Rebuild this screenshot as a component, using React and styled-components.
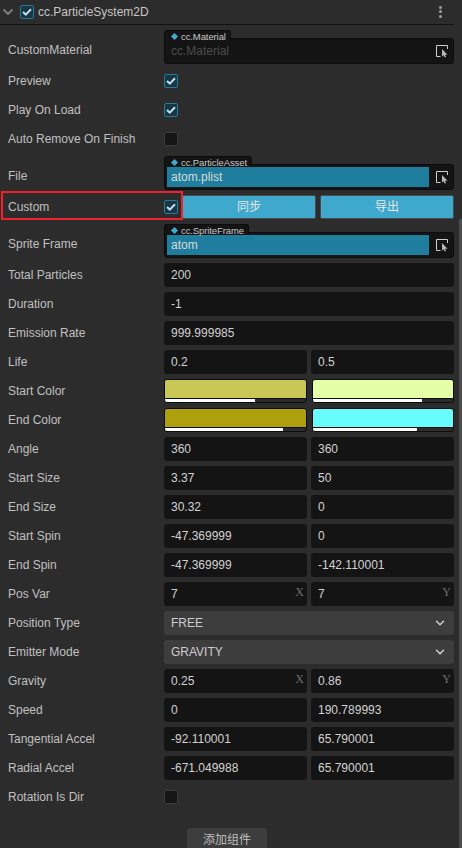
import React from "react";
import styled, { createGlobalStyle } from "styled-components";
import { ChevronDown } from "lucide-react";

const GlobalStyle = createGlobalStyle`
  html, body {
    margin: 0;
    height: 848px;
    overflow: hidden;
    background: #2c2c2c;
  }
`;

const Panel = styled.div`
  position: relative;
  width: 462px;
  height: 848px;
  overflow: hidden;
  background: #2c2c2c;
  color: #c0c0c0;
  font-family: "Liberation Sans", Arial, "Noto Sans CJK SC", sans-serif;
  font-size: 12px;
`;

const Header = styled.div`
  display: flex;
  align-items: center;
  gap: 4px;
  width: 454px;
  height: 25px;
  padding: 0 4px 1px 0;
  box-sizing: border-box;
  border-bottom: 1px solid #111;
`;

const Title = styled.span`
  flex: 1;
  font-size: 12px;
  color: #c6c6c6;
`;

const Dots = styled.div`
  display: flex;
  flex-direction: column;
  gap: 1.5px;
  margin-right: 8px;

  i {
    width: 3px;
    height: 3px;
    border-radius: 50%;
    background: #a0a0a0;
  }
`;

const List = styled.div`
  display: flex;
  flex-direction: column;
  gap: 5px;
  width: 454px;
  padding-top: 5px;
`;

const Row = styled.div`
  position: relative;
  display: flex;
  align-items: ${(p) => (p.$asset ? "flex-end" : "center")};
  min-height: 24px;
`;

const Label = styled.div`
  width: 164px;
  flex: none;
  padding-left: 8px;
  box-sizing: border-box;
  align-self: center;
  ${(p) => p.$asset && "padding-top: 5px;"}
`;

const Fields = styled.div`
  flex: 1;
  display: grid;
  grid-template-columns: repeat(${(p) => p.$cols || 1}, 1fr);
  gap: 4px;
`;

const ColorFields = styled.div`
  flex: 1;
  display: grid;
  grid-template-columns: 143px 142px;
  gap: 5px;
`;

const ActionFields = styled(Fields)`
  margin-left: 4px;
`;

const Input = styled.div`
  position: relative;
  height: 24px;
  line-height: 24px;
  padding-left: 7px;
  border-radius: 3px;
  background: #141414;
  color: #d2d2d2;
  overflow: hidden;
`;

const Axis = styled.span`
  position: absolute;
  right: 3px;
  top: -2px;
  font-family: "Liberation Serif", serif;
  font-size: 12px;
  color: #6e6e6e;
`;

const CheckBox = styled.div`
  display: flex;
  align-items: center;
  justify-content: center;
  width: 14px;
  height: 14px;
  box-sizing: border-box;
  border-radius: 2px;
  border: 1px solid ${(p) => (p.$on ? "#1f7e9e" : "#3c3c3c")};
  background: ${(p) => (p.$on ? "#1c3540" : "#161616")};
`;

const Swatch = styled.div`
  height: 24px;
  box-sizing: border-box;
  display: flex;
  flex-direction: column;
  border: 1px solid #0c0c0c;
  border-radius: 3px;
  background: #2c2c2c;
  overflow: hidden;
`;

const SwatchFill = styled.div`
  flex: 1;
  background: ${(p) => p.$color};
  border-bottom: 1px solid #0c0c0c;
`;

const AlphaTrack = styled.div`
  height: 3px;
`;

const AlphaBar = styled.div`
  height: 100%;
  background: #fff;
`;

const Select = styled.div`
  display: flex;
  align-items: center;
  justify-content: space-between;
  height: 24px;
  padding: 0 7px;
  border-radius: 3px;
  background: #3d3d3d;
  color: #cdcdcd;
`;

const AssetWrap = styled.div`
  position: relative;
  height: 34px;
  display: flex;
  flex-direction: column;
  justify-content: flex-end;
`;

const AssetTab = styled.div`
  position: absolute;
  left: 0;
  top: 0;
  display: flex;
  align-items: center;
  height: 10px;
  padding: 0 4px 0 7px;
  gap: 4px;
  background: #141414;
  border: 1px solid #0c0c0c;
  border-bottom: none;
  border-radius: 3px 3px 0 0;
  font-size: 9.5px;
  color: #c8c8c8;
  letter-spacing: -0.1px;
`;

const Diamond = styled.i`
  width: 5px;
  height: 5px;
  background: #43a9cc;
  transform: rotate(45deg);
`;

const AssetBox = styled.div`
  display: flex;
  align-items: center;
  height: 26px;
  box-sizing: border-box;
  padding: 2px 0 2px 2px;
  background: #141414;
  border: 1px solid #0c0c0c;
  border-radius: 3px;
`;

const AssetName = styled.div`
  flex: 1;
  height: 20px;
  line-height: 20px;
  padding-left: 4px;
  font-size: 12px;
  background: ${(p) => (p.$empty ? "transparent" : "#1f7e9e")};
  color: ${(p) => (p.$empty ? "#4c4c4c" : "#d8d8d8")};
`;

const AssetPick = styled.div`
  width: 24px;
  flex: none;
  box-sizing: border-box;
  display: flex;
  align-items: center;
  padding: 1px 0 0 7px;
`;

const ActionButton = styled.div`
  height: 24px;
  box-sizing: border-box;
  line-height: 22px;
  text-align: center;
  background: #3fa9cd;
  border: 1px solid #454c50;
  border-radius: 2px;
  color: #e6e6e6;
  font-size: 12px;
`;

const Highlight = styled.div`
  position: absolute;
  left: 1px;
  top: -4px;
  width: 182px;
  height: 29px;
  box-sizing: border-box;
  border: 2px solid #f0202c;
  pointer-events: none;
`;

const Footer = styled.div`
  display: flex;
  justify-content: center;
  width: 454px;
  margin-top: 19px;
`;

const AddButton = styled.div`
  width: 80px;
  height: 26px;
  line-height: 24px;
  text-align: center;
  border-radius: 3px 3px 0 0;
  background: #3d3d3d;
  color: #bdbdbd;
  font-size: 12px;
`;

const Scrollbar = styled.div`
  position: absolute;
  right: 0;
  top: 219px;
  bottom: 0;
  width: 3px;
  background: #4c4c4c;
`;

const Check = () => (
  <svg width="10" height="8" viewBox="0 0 10 8">
    <path d="M1 4 L3.8 6.6 L9 1.2" fill="none" stroke="#b9e4f3" strokeWidth="2" />
  </svg>
);

const PickIcon = () => (
  <svg width="13" height="13" viewBox="0 0 13 13">
    <path d="M4.5 11.5H.5V.5H11.5V4" fill="none" stroke="#cfcfcf" strokeWidth="1" />
    <path d="M6 4V11.5L7.5 10.2L8.8 12.5L10 12L9 9.8H11.5Z" fill="#b8b8b8" />
  </svg>
);

const Asset = ({ type, name, empty }) => (
  <AssetWrap>
    <AssetTab>
      <Diamond />
      {type}
    </AssetTab>
    <AssetBox>
      <AssetName $empty={empty}>{name}</AssetName>
      <AssetPick>
        <PickIcon />
      </AssetPick>
    </AssetBox>
  </AssetWrap>
);

const Color = ({ color, alpha }) => (
  <Swatch>
    <SwatchFill $color={color} />
    <AlphaTrack>
      <AlphaBar style={{ width: alpha + "%" }} />
    </AlphaTrack>
  </Swatch>
);

const Values = ({ values, axis }) => (
  <Fields $cols={values.length}>
    {values.map((v, i) => (
      <Input key={i}>
        {v}
        {axis && <Axis>{axis[i]}</Axis>}
      </Input>
    ))}
  </Fields>
);

const Toggle = ({ on }) => <CheckBox $on={on}>{on && <Check />}</CheckBox>;

const DropDown = ({ value }) => (
  <Fields>
    <Select>
      {value}
      <ChevronDown size={14} color="#d0d0d0" strokeWidth={2.5} />
    </Select>
  </Fields>
);

export default function App() {
  return (
    <Panel>
      <GlobalStyle />
      <Header>
        <ChevronDown size={16} color="#7c7c7c" strokeWidth={3} />
        <Toggle on />
        <Title>cc.ParticleSystem2D</Title>
        <Dots>
          <i />
          <i />
          <i />
        </Dots>
      </Header>
      <List>
        <Row $asset>
          <Label $asset>CustomMaterial</Label>
          <Fields>
            <Asset type="cc.Material" name="cc.Material" empty />
          </Fields>
        </Row>
        <Row>
          <Label>Preview</Label>
          <Toggle on />
        </Row>
        <Row>
          <Label>Play On Load</Label>
          <Toggle on />
        </Row>
        <Row>
          <Label>Auto Remove On Finish</Label>
          <Toggle />
        </Row>
        <Row $asset>
          <Label $asset>File</Label>
          <Fields>
            <Asset type="cc.ParticleAsset" name="atom.plist" />
          </Fields>
        </Row>
        <Row>
          <Highlight />
          <Label>Custom</Label>
          <Toggle on />
          <ActionFields $cols={2}>
            <ActionButton>同步</ActionButton>
            <ActionButton>导出</ActionButton>
          </ActionFields>
        </Row>
        <Row $asset>
          <Label $asset>Sprite Frame</Label>
          <Fields>
            <Asset type="cc.SpriteFrame" name="atom" />
          </Fields>
        </Row>
        <Row>
          <Label>Total Particles</Label>
          <Values values={["200"]} />
        </Row>
        <Row>
          <Label>Duration</Label>
          <Values values={["-1"]} />
        </Row>
        <Row>
          <Label>Emission Rate</Label>
          <Values values={["999.999985"]} />
        </Row>
        <Row>
          <Label>Life</Label>
          <Values values={["0.2", "0.5"]} />
        </Row>
        <Row>
          <Label>Start Color</Label>
          <ColorFields>
            <Color color="#c9c857" alpha={64} />
            <Color color="#e5ffa9" alpha={78} />
          </ColorFields>
        </Row>
        <Row>
          <Label>End Color</Label>
          <ColorFields>
            <Color color="#ae9f0f" alpha={84} />
            <Color color="#68fcfd" alpha={74} />
          </ColorFields>
        </Row>
        <Row>
          <Label>Angle</Label>
          <Values values={["360", "360"]} />
        </Row>
        <Row>
          <Label>Start Size</Label>
          <Values values={["3.37", "50"]} />
        </Row>
        <Row>
          <Label>End Size</Label>
          <Values values={["30.32", "0"]} />
        </Row>
        <Row>
          <Label>Start Spin</Label>
          <Values values={["-47.369999", "0"]} />
        </Row>
        <Row>
          <Label>End Spin</Label>
          <Values values={["-47.369999", "-142.110001"]} />
        </Row>
        <Row>
          <Label>Pos Var</Label>
          <Values values={["7", "7"]} axis={["X", "Y"]} />
        </Row>
        <Row>
          <Label>Position Type</Label>
          <DropDown value="FREE" />
        </Row>
        <Row>
          <Label>Emitter Mode</Label>
          <DropDown value="GRAVITY" />
        </Row>
        <Row>
          <Label>Gravity</Label>
          <Values values={["0.25", "0.86"]} axis={["X", "Y"]} />
        </Row>
        <Row>
          <Label>Speed</Label>
          <Values values={["0", "190.789993"]} />
        </Row>
        <Row>
          <Label>Tangential Accel</Label>
          <Values values={["-92.110001", "65.790001"]} />
        </Row>
        <Row>
          <Label>Radial Accel</Label>
          <Values values={["-671.049988", "65.790001"]} />
        </Row>
        <Row>
          <Label>Rotation Is Dir</Label>
          <Toggle />
        </Row>
      </List>
      <Footer>
        <AddButton>添加组件</AddButton>
      </Footer>
      <Scrollbar />
    </Panel>
  );
}
